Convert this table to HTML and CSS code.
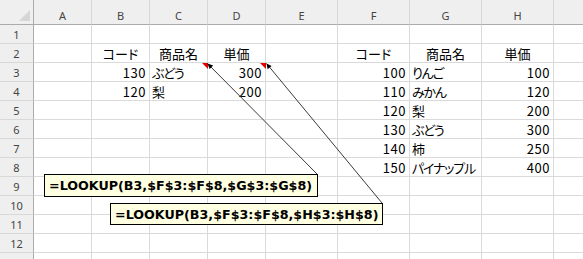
FILE: index.html
```html
<!DOCTYPE html>
<html lang="ja">
<head>
  <meta charset="UTF-8">
  <title>LOOKUP</title>
  <link rel="stylesheet" href="styles.css">
</head>
<body>
  <div class="sheet">
    <div class="row head">
      <div class="corner"><span class="tri"></span></div>
      <div class="col-h">A</div><div class="col-h">B</div><div class="col-h">C</div><div class="col-h">D</div>
      <div class="col-h">E</div><div class="col-h">F</div><div class="col-h">G</div><div class="col-h">H</div><div class="col-h"></div>
    </div>

    <div class="row">
      <div class="row-h">1</div>
      <div class="cell"></div><div class="cell"></div><div class="cell"></div><div class="cell"></div>
      <div class="cell"></div><div class="cell"></div><div class="cell"></div><div class="cell"></div><div class="cell"></div>
    </div>
    <div class="row">
      <div class="row-h">2</div>
      <div class="cell"></div><div class="cell mid">コード</div><div class="cell mid">商品名</div><div class="cell mid">単価</div>
      <div class="cell"></div><div class="cell mid">コード</div><div class="cell mid">商品名</div><div class="cell mid">単価</div><div class="cell"></div>
    </div>
    <div class="row">
      <div class="row-h">3</div>
      <div class="cell"></div><div class="cell num">130</div><div class="cell txt">ぶどう</div><div class="cell num">300</div>
      <div class="cell"></div><div class="cell num">100</div><div class="cell txt">りんご</div><div class="cell num">100</div><div class="cell"></div>
    </div>
    <div class="row">
      <div class="row-h">4</div>
      <div class="cell"></div><div class="cell num">120</div><div class="cell txt">梨</div><div class="cell num">200</div>
      <div class="cell"></div><div class="cell num">110</div><div class="cell txt">みかん</div><div class="cell num">120</div><div class="cell"></div>
    </div>
    <div class="row">
      <div class="row-h">5</div>
      <div class="cell"></div><div class="cell"></div><div class="cell"></div><div class="cell"></div>
      <div class="cell"></div><div class="cell num">120</div><div class="cell txt">梨</div><div class="cell num">200</div><div class="cell"></div>
    </div>
    <div class="row">
      <div class="row-h">6</div>
      <div class="cell"></div><div class="cell"></div><div class="cell"></div><div class="cell"></div>
      <div class="cell"></div><div class="cell num">130</div><div class="cell txt">ぶどう</div><div class="cell num">300</div><div class="cell"></div>
    </div>
    <div class="row">
      <div class="row-h">7</div>
      <div class="cell"></div><div class="cell"></div><div class="cell"></div><div class="cell"></div>
      <div class="cell"></div><div class="cell num">140</div><div class="cell txt">柿</div><div class="cell num">250</div><div class="cell"></div>
    </div>
    <div class="row">
      <div class="row-h">8</div>
      <div class="cell"></div><div class="cell"></div><div class="cell"></div><div class="cell"></div>
      <div class="cell"></div><div class="cell num">150</div><div class="cell txt">パイナップル</div><div class="cell num">400</div><div class="cell"></div>
    </div>
    <div class="row">
      <div class="row-h">9</div>
      <div class="cell"></div><div class="cell"></div><div class="cell"></div><div class="cell"></div>
      <div class="cell"></div><div class="cell"></div><div class="cell"></div><div class="cell"></div><div class="cell"></div>
    </div>
    <div class="row">
      <div class="row-h">10</div>
      <div class="cell"></div><div class="cell"></div><div class="cell"></div><div class="cell"></div>
      <div class="cell"></div><div class="cell"></div><div class="cell"></div><div class="cell"></div><div class="cell"></div>
    </div>
    <div class="row">
      <div class="row-h">11</div>
      <div class="cell"></div><div class="cell"></div><div class="cell"></div><div class="cell"></div>
      <div class="cell"></div><div class="cell"></div><div class="cell"></div><div class="cell"></div><div class="cell"></div>
    </div>
    <div class="row">
      <div class="row-h">12</div>
      <div class="cell"></div><div class="cell"></div><div class="cell"></div><div class="cell"></div>
      <div class="cell"></div><div class="cell"></div><div class="cell"></div><div class="cell"></div><div class="cell"></div>
    </div>
    <div class="row">
      <div class="row-h">13</div>
      <div class="cell"></div><div class="cell"></div><div class="cell"></div><div class="cell"></div>
      <div class="cell"></div><div class="cell"></div><div class="cell"></div><div class="cell"></div><div class="cell"></div>
    </div>

    <!-- コメントの引き出し線 -->
    <svg class="leaders" width="583" height="259" viewBox="0 0 583 259">
      <polygon points="202,63 208,63 208,69" fill="#e00000"/>
      <polygon points="260,63 266,63 266,69" fill="#e00000"/>
      <line x1="207.5" y1="63.5" x2="317" y2="174" stroke="#3a3a3a" stroke-width="1"/>
      <line x1="266.5" y1="63.5" x2="382" y2="203" stroke="#3a3a3a" stroke-width="1"/>
      <polygon points="207.5,63.5 209.6,69 213.2,65.4" fill="#000"/>
      <polygon points="266.5,63.5 267.6,69.3 271.6,66" fill="#000"/>
    </svg>

    <div class="note note-c3">=LOOKUP(B3,$F$3:$F$8,$G$3:$G$8)</div>
    <div class="note note-d3">=LOOKUP(B3,$F$3:$F$8,$H$3:$H$8)</div>
  </div>
</body>
</html>
```

FILE: styles.css
```css
/* シート全体 */
* { box-sizing: border-box; margin: 0; padding: 0; }
body { background: #fff; overflow: hidden; }

.sheet {
  position: relative;
  width: 583px;
  height: 259px;
  overflow: hidden;
  font-family: "Noto Sans CJK JP", sans-serif;
  font-size: 13px;
  color: #000;
}

/* 行: 行番号 + A〜I 列 */
.row {
  display: grid;
  grid-template-columns: 34px 58px 58px 58px 58px 72px 72px 72px 72px 72px;
  height: 19px;
}
.row.head { height: 25px; }

/* 見出し */
.corner, .col-h, .row-h {
  background: #efefef;
  color: #444;
  font-family: "Noto Sans", sans-serif;
  font-size: 11px;
  display: flex;
  align-items: center;
  justify-content: center;
}
.corner {
  position: relative;
  border-right: 1px solid #ababab;
  border-bottom: 1px solid #ababab;
}
.corner .tri {
  position: absolute;
  right: 3px;
  bottom: 3px;
  width: 0;
  height: 0;
  border-left: 11px solid transparent;
  border-bottom: 11px solid #d6d6d6;
}
.col-h {
  border-right: 1px solid #d8d8d8;
  border-bottom: 1px solid #ababab;
  padding-top: 6px;
}
.row-h {
  border-right: 1px solid #ababab;
  border-bottom: 1px solid #d8d8d8;
}

/* セル */
.cell {
  display: flex;
  align-items: center;
  padding: 0 2px;
  border-right: 1px solid #dadada;
  border-bottom: 1px solid #dadada;
  white-space: nowrap;
  overflow: hidden;
  font-feature-settings: "palt";
}
.cell.num { justify-content: flex-end; padding-right: 3px; letter-spacing: 0.5px; }
.cell.mid { justify-content: center; }
.cell.txt { letter-spacing: -1.2px; }

/* コメント */
.leaders {
  position: absolute;
  left: 0;
  top: 0;
  pointer-events: none;
}
.note {
  position: absolute;
  height: 23px;
  padding-left: 4px;
  display: flex;
  align-items: center;
  background: #ffffe1;
  border: 1px solid #000;
  font-family: "DejaVu Sans", sans-serif;
  font-weight: bold;
  font-size: 12.7px;
  white-space: nowrap;
}
.note-c3 { left: 44px; top: 174px; width: 274px; }
.note-d3 { left: 110px; top: 203px; width: 273px; height: 22px; }
```
